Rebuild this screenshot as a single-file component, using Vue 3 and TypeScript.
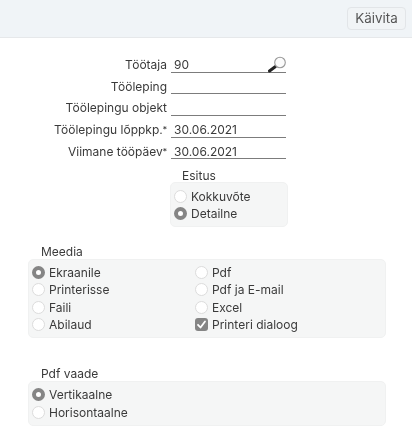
<script setup lang="ts">
interface Field { label: string; value: string; search?: boolean; star?: boolean }
const fields: Field[] = [
  { label: 'Töötaja', value: '90', search: true },
  { label: 'Tööleping', value: '' },
  { label: 'Töölepingu objekt', value: '' },
  { label: 'Töölepingu lõppkp.', value: '30.06.2021', star: true },
  { label: 'Viimane tööpäev', value: '30.06.2021', star: true },
]
interface Opt { label: string; kind: 'off' | 'on' | 'check' }
const esitus: Opt[] = [
  { label: 'Kokkuvõte', kind: 'off' },
  { label: 'Detailne', kind: 'on' },
]
const meedia: Opt[] = [
  { label: 'Ekraanile', kind: 'on' },
  { label: 'Pdf', kind: 'off' },
  { label: 'Printerisse', kind: 'off' },
  { label: 'Pdf ja E-mail', kind: 'off' },
  { label: 'Faili', kind: 'off' },
  { label: 'Excel', kind: 'off' },
  { label: 'Abilaud', kind: 'off' },
  { label: 'Printeri dialoog', kind: 'check' },
]
const vaade: Opt[] = [
  { label: 'Vertikaalne', kind: 'on' },
  { label: 'Horisontaalne', kind: 'off' },
]
const groups = [
  { title: 'Esitus', opts: esitus, cls: 'esitus' },
  { title: 'Meedia', opts: meedia, cls: 'meedia' },
  { title: 'Pdf vaade', opts: vaade, cls: 'vaade' },
]
</script>

<template>
  <div class="page">
    <header class="bar">
      <button class="run">Käivita</button>
    </header>
    <div class="form">
      <div v-for="f in fields" :key="f.label" class="row">
        <label class="lbl">{{ f.label }}<span v-if="f.star" class="star">*</span></label>
        <div class="field">
          <span>{{ f.value }}</span>
          <svg v-if="f.search" class="mag" viewBox="0 0 18 18" width="18" height="18">
            <path d="M1.5 15 L7.5 10.5" stroke="#222" stroke-width="3" stroke-linecap="round" />
            <circle cx="12" cy="6.5" r="5.3" fill="#fbfbfb" stroke="#999" stroke-width="1.1" />
          </svg>
        </div>
      </div>
    </div>
    <section v-for="g in groups" :key="g.title" class="group" :class="g.cls">
      <div class="title">{{ g.title }}</div>
      <div class="box">
        <div v-for="o in g.opts" :key="o.label" class="opt">
          <span v-if="o.kind === 'check'" class="check">
            <svg viewBox="0 0 13 13" width="13" height="13">
              <path d="M3 6.8 L5.5 9.5 L10 3.5" fill="none" stroke="#fff" stroke-width="1.8" stroke-linecap="round" stroke-linejoin="round" />
            </svg>
          </span>
          <span v-else class="radio" :class="{ on: o.kind === 'on' }"></span>
          <span class="txt">{{ o.label }}</span>
        </div>
      </div>
    </section>
  </div>
</template>

<style>
html, body { margin: 0; background: #fff; overflow: hidden; }
</style>

<style scoped>
.page {
  width: 412px;
  height: 431px;
  overflow: hidden;
  font-family: Inter, "Liberation Sans", sans-serif;
  font-size: 12px;
  color: #3a3a3a;
  filter: blur(0.35px);
}
.bar {
  height: 36px;
  background: #f0f4f7;
  border-bottom: 1px solid #e6e8ea;
  display: flex;
  justify-content: flex-end;
  align-items: center;
  padding: 0 6px 1px 0;
}
.run {
  width: 59px;
  height: 23px;
  padding: 0;
  border: 1px solid #e2e5e8;
  border-radius: 4px;
  background: #f1f4f6;
  font: inherit;
  font-size: 13.4px;
  color: #555;
}
.form {
  padding-top: 13px;
}
.row {
  display: flex;
  height: 21.7px;
  align-items: stretch;
}
.lbl {
  width: 167px;
  text-align: right;
  line-height: 27px;
  white-space: nowrap;
}
.star { font-size: 8.5px; vertical-align: 1px; }
.field {
  position: relative;
  width: 115px;
  margin-left: 4px;
  box-sizing: border-box;
  border-bottom: 1px solid #7c7c7c;
  padding-left: 3px;
  line-height: 27px;
}
.mag {
  position: absolute;
  right: 0;
  top: 5px;
}
.group .title {
  height: 16px;
  line-height: 16px;
}
.esitus {
  margin: 9px 0 0 170px;
  width: 118px;
}
.esitus .title { padding-left: 12px; }
.esitus .box { margin-top: -2px; }
.meedia {
  margin: 17px 0 0 28px;
  width: 358px;
}
.vaade {
  margin: 28px 0 0 28px;
  width: 358px;
}
.meedia .title, .vaade .title { padding-left: 13px; }
.box {
  box-sizing: border-box;
  margin-top: -1px;
  background: #f5f6f6;
  border: 1px solid #f0f1f1;
  border-radius: 5px;
  padding: 4px 3px 4px;
}
.meedia .box {
  display: grid;
  grid-template-columns: 163px 1fr;
}
.opt {
  display: flex;
  align-items: center;
  height: 17.3px;
  gap: 4px;
}
.radio {
  flex: none;
  box-sizing: border-box;
  width: 13px;
  height: 13px;
  border-radius: 50%;
  background: #fff;
  border: 1px solid #dcdcdc;
}
.radio.on {
  background: #fff;
  border: 4px solid #858585;
}
.check {
  flex: none;
  width: 13px;
  height: 13px;
  border-radius: 3px;
  background: #858585;
  display: block;
}
.check svg { display: block; }
.txt { white-space: nowrap; }
</style>
